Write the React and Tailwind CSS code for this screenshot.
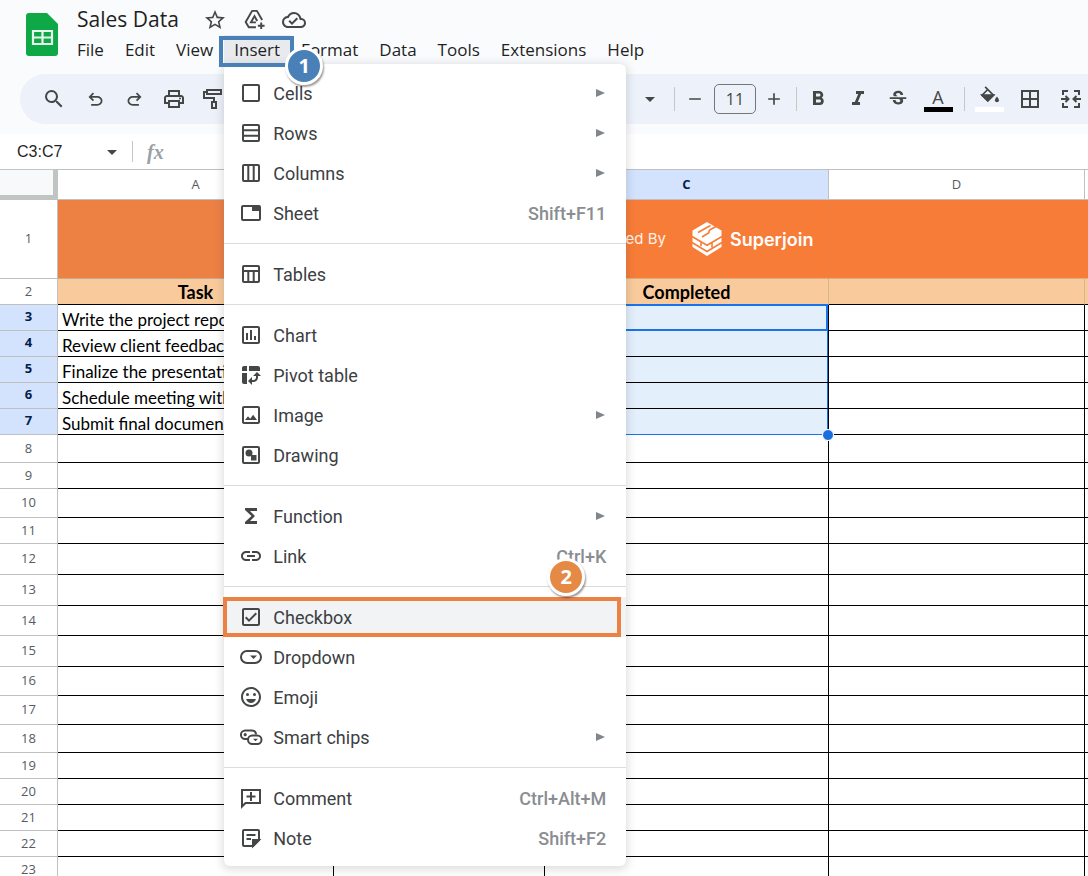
import React from 'react';
import {
  MdStarBorder, MdOutlineCloudDone, MdSearch, MdOutlinePrint, MdArrowDropDown,
  MdAdd, MdRemove, MdFormatBold, MdFormatItalic, MdStrikethroughS, MdBorderAll, MdOutlineCheckBox,
  MdOutlineInsertChart, MdOutlineImage, MdFunctions, MdLink, MdOutlineEmojiEmotions, MdPivotTableChart,
} from 'react-icons/md';

// 24px outline icons that the icon pack does not have
const Svg = ({ children, size = 24, className = '' }) => (
  <svg width={size} height={size} viewBox="0 0 24 24" fill="none" stroke="currentColor" strokeWidth="2" className={className} aria-hidden="true">
    {children}
  </svg>
);
const Fill = ({ d, size = 21 }) => (
  <svg width={size} height={size} viewBox="0 -960 960 960" fill="currentColor" aria-hidden="true"><path d={d} /></svg>
);

const UndoIcon = () => <Fill d="M280-200v-80h284q63 0 109.500-40T720-420q0-60-46.500-100T564-560H312l104 104-56 56-200-200 200-200 56 56-104 104h252q97 0 166.500 63T800-420q0 94-69.500 157T564-200H280Z" />;
const RedoIcon = () => <Fill d="M396-200q-97 0-166.500-63T160-420q0-94 69.500-157T396-640h252L544-744l56-56 200 200-200 200-56-56 104-104H396q-63 0-109.500 40T240-420q0 60 46.500 100T396-280h284v80H396Z" />;
const RollerIcon = () => <Svg><path d="M6 3h14v4H6zM6 5H3v6h10v4M11 15h4v6h-4z" /></Svg>;
const DriveIcon = () => (
  <Svg size={23}>
    <path d="M13.500 20H6l-3.200-5.500L9.500 3h5l5.500 9.500" strokeLinejoin="round" />
    <path d="M13.500 15H8.300L12 8.500l2.800 5M19 15v7M15.500 18.500h7" />
  </Svg>
);
const FillIcon = () => (
  <Svg size={21}>
    <path d="M7 1l9.500 9.500-6.500 6.500-6.500-6.500L10 4" />
    <path d="M3.500 10.500h13L10 17z" fill="currentColor" />
    <path d="M20.500 12s-2.300 2.600-2.300 4.200a2.300 2.300 0 0 0 4.600 0c0-1.600-2.300-4.200-2.300-4.200z" fill="currentColor" stroke="none" />
  </Svg>
);
const MergeIcon = () => (
  <Svg size={24}>
    <path d="M9 4H4v4M15 4h5v4M9 20H4v-4M15 20h5v-4M2 12h7M22 12h-7M6.500 9l3 3-3 3M17.500 9l-3 3 3 3" />
  </Svg>
);

const CellsIcon = () => <Svg><rect x="4" y="4" width="16" height="16" rx="1" /></Svg>;
const RowsIcon = () => <Svg><rect x="4" y="4" width="16" height="16" rx="1" /><path d="M4 9.300h16M4 14.700h16" /></Svg>;
const ColumnsIcon = () => <Svg><rect x="4" y="4" width="16" height="16" rx="1" /><path d="M9.300 4v16M14.700 4v16" /></Svg>;
const SheetIcon = () => <Svg><rect x="3" y="5" width="18" height="14" rx="1" /><path d="M13 5h8v5h-8z" fill="currentColor" stroke="none" /></Svg>;
const TablesIcon = () => <Svg><rect x="4" y="4" width="16" height="16" rx="1" /><path d="M4 9h16M9.300 9v11M14.700 9v11" /></Svg>;
const DrawingIcon = () => (
  <Svg>
    <rect x="4" y="4" width="16" height="16" rx="1" />
    <g fill="currentColor" stroke="none"><circle cx="10" cy="10" r="3.500" /><path d="M12 12h5.500v5.500H12z" /></g>
  </Svg>
);
const DropdownIcon = () => (
  <Svg><rect x="2" y="6" width="20" height="12" rx="6" /><path d="M11 10.500h7L14.500 14z" fill="currentColor" stroke="none" /></Svg>
);
const ChipsIcon = () => (
  <Svg>
    <path d="M9 14H6.200a4.200 4.200 0 1 1 0-8.500H13a4.200 4.200 0 0 1 4 4" />
    <circle cx="6.200" cy="9.700" r="1.600" fill="currentColor" stroke="none" />
    <rect x="9" y="10.500" width="13.500" height="8.500" rx="4.250" />
    <path d="M14 13.700h5l-2.500 2.500z" fill="currentColor" stroke="none" />
  </Svg>
);
const CommentIcon = () => <Svg><path d="M3 20.500V4h18v13H6.500zM12 6v9M7.500 10.500h9" /></Svg>;
const NoteIcon = () => (
  <Svg>
    <path d="M14 20H5a1 1 0 0 1-1-1V5a1 1 0 0 1 1-1h14a1 1 0 0 1 1 1v9zM7.500 9h9M7.500 13H12" />
    <path d="M14 20v-6h6z" fill="currentColor" />
  </Svg>
);

const MENU_GROUPS = [
  [
    { label: 'Cells', icon: CellsIcon, sub: true },
    { label: 'Rows', icon: RowsIcon, sub: true },
    { label: 'Columns', icon: ColumnsIcon, sub: true },
    { label: 'Sheet', icon: SheetIcon, keys: 'Shift+F11' },
  ],
  [{ label: 'Tables', icon: TablesIcon }],
  [
    { label: 'Chart', icon: MdOutlineInsertChart },
    { label: 'Pivot table', icon: MdPivotTableChart },
    { label: 'Image', icon: MdOutlineImage, sub: true },
    { label: 'Drawing', icon: DrawingIcon },
  ],
  [
    { label: 'Function', icon: MdFunctions, sub: true },
    { label: 'Link', icon: MdLink, keys: 'Ctrl+K' },
  ],
  [
    { label: 'Checkbox', icon: MdOutlineCheckBox, active: true },
    { label: 'Dropdown', icon: DropdownIcon },
    { label: 'Emoji', icon: MdOutlineEmojiEmotions },
    { label: 'Smart chips', icon: ChipsIcon, sub: true },
  ],
  [
    { label: 'Comment', icon: CommentIcon, keys: 'Ctrl+Alt+M' },
    { label: 'Note', icon: NoteIcon, keys: 'Shift+F2' },
  ],
];

const TASKS = [
  'Write the project report',
  'Review client feedback',
  'Finalize the presentation',
  'Schedule meeting with team',
  'Submit final documents',
];

const ROWS = [
  { n: 8, h: 'h-[28px]' }, { n: 9, h: 'h-[26px]' }, { n: 10, h: 'h-[29px]' }, { n: 11, h: 'h-[26px]' },
  { n: 12, h: 'h-[31px]' }, { n: 13, h: 'h-[31px]' }, { n: 14, h: 'h-[30px]' }, { n: 15, h: 'h-[31px]' },
  { n: 16, h: 'h-[29px]' }, { n: 17, h: 'h-[29px]' }, { n: 18, h: 'h-[28px]' }, { n: 19, h: 'h-[26px]' },
  { n: 20, h: 'h-[26px]' }, { n: 21, h: 'h-[26px]' }, { n: 22, h: 'h-[26px]' }, { n: 23, h: 'h-[26px]' },
];

function Step({ children, className }) {
  return (
    <span className={`absolute z-20 flex size-[38px] items-center justify-center rounded-full border-[3px] border-white font-['Open_Sans',sans-serif] text-[20px] font-bold text-white shadow-[1px_2px_2px_0px_rgba(0,0,0,0.4)] ${className}`}>
      {children}
    </span>
  );
}

function InsertMenu() {
  return (
    <div className="absolute top-[29px] left-0 z-10 w-[402px] rounded-md bg-white pt-[9px] pb-2 font-[Roboto,sans-serif] shadow-[0_2px_8px_2px_rgba(60,64,67,0.16)]" role="menu">
      {MENU_GROUPS.map((group, i) => (
        <div key={i} className={i > 0 ? 'mt-[10px] border-t border-[#dadce0] pt-[10px]' : ''}>
          {group.map(({ label, icon: Icon, sub, keys, active }) => (
            <div key={label} className="relative">
              <button type="button" role="menuitem" className={`flex h-10 w-full items-center pr-5 pl-[15px] text-left text-[18px] text-[#3c4043] ${active ? 'bg-[#f1f3f4]' : ''}`}>
                <span className="flex w-[34px] shrink-0 text-[#444746]"><Icon size={24} /></span>
                <span className="grow">{label}</span>
                {sub && (
                  <svg width="10" height="8" viewBox="0 0 10 8" className="text-[#80868b]" aria-hidden="true">
                    <path d="M0 0l9 4-9 4z" fill="currentColor" />
                  </svg>
                )}
                {keys && <span className="font-medium text-[#8a8d91]">{keys}</span>}
              </button>
              {active && (
                <>
                  <span className="pointer-events-none absolute top-0 right-[5px] bottom-0 -left-px border-4 border-[#ec8144]" />
                  <Step className="-top-[39px] left-[323px] bg-[#e58a45]">2</Step>
                </>
              )}
            </div>
          ))}
        </div>
      ))}
    </div>
  );
}

function MenuBar() {
  const item = 'h-[30px] px-[10px]';
  return (
    <nav className="flex gap-px text-[17px] text-[#1f1f1f]">
      <button type="button" className={item}>File</button>
      <button type="button" className={item}>Edit</button>
      <button type="button" className={item}>View</button>
      <div className="relative">
        <button type="button" className={`${item} bg-[#e8eaed]`}>Insert</button>
        <InsertMenu />
        <span className="pointer-events-none absolute top-px -right-[4px] -bottom-[2px] -left-[5px] z-10 border-4 border-[#4a80b8]" />
        <Step className="-right-[33px] top-[12px] bg-[#4a80b8]">1</Step>
      </div>
      <button type="button" className={item}>Format</button>
      <button type="button" className={item}>Data</button>
      <button type="button" className={item}>Tools</button>
      <button type="button" className={item}>Extensions</button>
      <button type="button" className={item}>Help</button>
    </nav>
  );
}

function Tool({ label, className = 'w-10', children }) {
  return (
    <button type="button" aria-label={label} className={`flex h-10 shrink-0 items-center justify-center ${className}`}>
      {children}
    </button>
  );
}

const Divider = ({ className = '' }) => <span className={`h-6 w-px shrink-0 bg-[#c7c7c7] ${className}`} />;

function Toolbar() {
  return (
    <div className="ml-5 flex h-[50px] items-center overflow-hidden rounded-l-full bg-[#edf2fa] pl-3 text-[#444746]">
      <Tool label="Search" className="w-[44px]"><MdSearch size={24} /></Tool>
      <Tool label="Undo" className="w-[39px]"><UndoIcon /></Tool>
      <Tool label="Redo" className="w-[39px]"><RedoIcon /></Tool>
      <Tool label="Print" className="w-[39px]"><MdOutlinePrint size={24} /></Tool>
      <Tool label="Paint format" className="w-[39px]"><RollerIcon /></Tool>
      <div className="w-[398px] shrink-0" />
      <Tool label="Font"><MdArrowDropDown size={24} /></Tool>
      <Divider className="ml-1" />
      <Tool label="Decrease font size" className="w-[39px]"><MdRemove size={20} /></Tool>
      <input aria-label="Font size" defaultValue="11" className="h-[30px] w-[42px] shrink-0 rounded-[5px] border border-[#747775] bg-transparent text-center text-[16px]" />
      <Tool label="Increase font size" className="w-9"><MdAdd size={20} /></Tool>
      <Divider className="mr-px ml-1" />
      <Tool label="Bold"><MdFormatBold size={24} /></Tool>
      <Tool label="Italic"><MdFormatItalic size={24} /></Tool>
      <Tool label="Strikethrough"><MdStrikethroughS size={22} /></Tool>
      <Tool label="Text color">
        <span className="flex w-[29px] flex-col items-center border-b-[5px] border-black text-[18px] leading-[20px] font-medium">A</span>
      </Tool>
      <Divider className="mr-1 ml-[6px]" />
      <Tool label="Fill color">
        <span className="flex w-[29px] justify-center border-b-[5px] border-white"><FillIcon /></span>
      </Tool>
      <Tool label="Borders" className="w-[42px]"><MdBorderAll size={24} /></Tool>
      <Tool label="Merge cells"><MergeIcon /></Tool>
    </div>
  );
}

function Superjoin() {
  return (
    <div className="flex items-center font-[Inter,sans-serif] whitespace-nowrap text-white">
      <span className="w-[121px] shrink-0 text-right text-[15px] text-[#fff3e8]">Powered By</span>
      <svg width="30" height="34" viewBox="0 0 30 34" className="ml-[26px] shrink-0" aria-hidden="true">
        <path d="M15 0l14.500 8.500V25L15 34 .5 25V8.500z" fill="#fff" />
        <path d="M6 10.500L18.500 3.500M10 15l6.500-4c1.500-1-.5-2 1.500-3.200L24 4.500M0 14.500l15 8.800 15-8.800M0 20.500l15 9 15-9M9 19.500v4.500M20 20v5.500" fill="none" stroke="#f77c37" strokeWidth="1.600" />
      </svg>
      <span className="ml-2 text-[18px] font-semibold">Superjoin</span>
    </div>
  );
}

const head = "border-r border-b border-[#c0c0c0] p-0 text-center font-['Open_Sans',sans-serif] text-[13px] font-normal text-[#575b5f]";
const headOn = "border-r border-b border-[#c0c0c0] bg-[#d3e3fd] p-0 text-center font-['Open_Sans',sans-serif] text-[13px] font-bold text-[#041e49]";
const cell = 'border-r border-b border-black p-0';
const lastCell = 'border-b border-black p-0';

function Sheet() {
  return (
    <table className="w-full min-w-[1088px] table-fixed border-separate border-spacing-0">
      <colgroup>
        <col className="w-[58px]" />
        <col className="w-[276px]" />
        <col className="w-[211px]" />
        <col className="w-[284px]" />
        <col className="w-[256px]" />
        <col />
      </colgroup>
      <thead>
        <tr className="h-[31px]">
          <th className="border-t border-r-[5px] border-b-[5px] border-[#c0c4c2] bg-[#f8f9fa] p-0" />
          <th className={`${head} border-t`}>A</th>
          <th className={`${head} border-t`}>B</th>
          <th className={`${headOn} border-t`}>C</th>
          <th className={`${head} border-t`}>D</th>
          <th className="border-t border-b border-[#c0c0c0] p-0" />
        </tr>
      </thead>
      <tbody className="font-[Lato,sans-serif] text-[16px] text-black">
        <tr className="h-[79px]">
          <th className={head}>1</th>
          <td className="border-b border-[#c9a98c] bg-[#ed8144] p-0" />
          <td className="border-b border-[#c9a98c] bg-[#f77c37] p-0" />
          <td className="border-r border-b border-r-[#ea8045] border-b-[#dcae82] bg-[#f77c37] p-0"><Superjoin /></td>
          <td className="border-b border-[#dcae82] bg-[#f77c37] p-0" />
          <td className="border-b border-[#dcae82] bg-[#f77c37] p-0" />
        </tr>
        <tr className="h-[26px] text-center text-[18px] leading-[24px] font-bold">
          <th className={`${head} pb-[2px] leading-[20px]`}>2</th>
          <td className="border-r border-b border-r-[#d9b48c] border-b-black bg-[#f9cb9c] p-0">Task</td>
          <td className="border-r border-b border-r-[#d9b48c] border-b-black bg-[#f9cb9c] p-0" />
          <td className="border-r border-b border-r-[#d9b48c] border-b-[#1a73e8] bg-[#f9cb9c] p-0">Completed</td>
          <td className="border-r border-b border-r-[#d9b48c] border-b-black bg-[#f9cb9c] p-0" />
          <td className="border-b border-black bg-[#f9cb9c] p-0" />
        </tr>
        {TASKS.map((task, i) => (
          <tr key={task} className="h-[26px]">
            <th className={`${headOn} pb-[3px] leading-[20px]`}>{i + 3}</th>
            <td className={`${cell} overflow-hidden pt-1 pl-1 align-bottom text-[17px] leading-[20px] whitespace-nowrap`}>{task}</td>
            <td className={cell} />
            <td className={`relative border-r border-b border-r-black bg-[#e4effc] p-0 ${i === 4 ? 'border-b-[#1a73e8]' : 'border-b-black'}`}>
              <span className={`absolute border-[#1a73e8] ${i === 0 ? 'inset-x-0 -top-px -bottom-px border-2' : 'inset-0 border-r'}`} />
              {i === 4 && <span className="absolute -right-[6px] -bottom-[7px] z-[1] size-3 rounded-full border border-white bg-[#1a6fe0]" />}
            </td>
            <td className={cell} />
            <td className={lastCell} />
          </tr>
        ))}
        {ROWS.map(({ n, h }) => (
          <tr key={n} className={h}>
            <th className={head}>{n}</th>
            <td className={cell} />
            <td className={cell} />
            <td className={cell} />
            <td className={cell} />
            <td className={lastCell} />
          </tr>
        ))}
      </tbody>
    </table>
  );
}

export default function App() {
  return (
    <div className="h-screen overflow-hidden bg-white font-['Open_Sans',sans-serif]">
      <header className="bg-[#f9fbfd] pb-[10px]">
        <div className="flex h-[74px] pl-[26px]">
          <svg width="32" height="44" viewBox="0 0 32 44" className="mt-[13px] shrink-0" aria-label="Sheets">
            <path d="M3 0h18l11 11v29a3 3 0 0 1-3 3H3a3 3 0 0 1-3-3V3a3 3 0 0 1 3-3z" fill="#0fa847" />
            <path d="M7 18h19v13H7zM7 24.500h19M16.500 18v13" fill="none" stroke="#e8f6ec" strokeWidth="2.200" />
          </svg>
          <div className="pl-[9px]">
            <div className="flex h-[35px] items-end gap-4 pb-px pl-[10px] text-[#444746]">
              <h1 className="mr-2 text-[21px] leading-[30px] text-[#1f1f1f]">Sales Data</h1>
              <button type="button" aria-label="Star" className="pb-[2px]"><MdStarBorder size={24} /></button>
              <button type="button" aria-label="Move" className="pb-[3px]"><DriveIcon /></button>
              <button type="button" aria-label="Saved to Drive" className="pb-[2px]"><MdOutlineCloudDone size={24} /></button>
            </div>
            <MenuBar />
          </div>
        </div>
        <Toolbar />
      </header>
      <div className="flex h-[35px] items-center text-[#444746]">
        <input aria-label="Name box" defaultValue="C3:C7" className="w-[85px] bg-transparent pl-[17px] font-['Liberation_Sans',Arial,sans-serif] text-[16px] text-[#1f1f1f]" />
        <button type="button" aria-label="Named ranges" className="ml-[15px]"><MdArrowDropDown size={24} /></button>
        <span className="mr-[14px] ml-2 h-[21px] w-px bg-[#c7c7c7]" />
        <span className="font-['Liberation_Serif',serif] text-[20px] font-bold text-[#9aa0a6] italic">fx</span>
      </div>
      <Sheet />
    </div>
  );
}
